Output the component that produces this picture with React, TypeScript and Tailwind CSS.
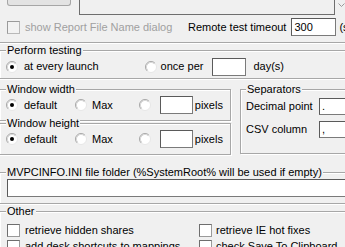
import React from "react";

function Radio({ checked = false }: { checked?: boolean }) {
  return (
    <svg width="12" height="12" viewBox="0 0 12 12" className="shrink-0">
      <circle cx="6" cy="6" r="5.5" fill="#fff" stroke="#e6e6e6" />
      <path d="M2.11 9.89 A5.5 5.5 0 0 1 9.89 2.11" fill="none" stroke="#a8a8a8" />
      <path d="M2.82 9.18 A4.5 4.5 0 0 1 9.18 2.82" fill="none" stroke="#d8d8d8" />
      {checked && <circle cx="6" cy="6" r="2" fill="#000" />}
    </svg>
  );
}

function Check({ disabled = false }: { disabled?: boolean }) {
  return (
    <span
      className={
        disabled
          ? "block w-[13px] h-[13px] shrink-0 border border-[#b8b8b8] border-t-[#9a9a9a] border-l-[#9a9a9a] bg-[#f2f2f2]"
          : "block w-[13px] h-[13px] shrink-0 border border-[#9a9a9a] border-t-[#6e6e6e] border-l-[#6e6e6e] bg-white"
      }
    />
  );
}

function Field({ w, h = 18, children }: { w: string; h?: number; children?: React.ReactNode }) {
  return (
    <div
      className={`${w} ${h === 17 ? "h-[17px]" : "h-[18px]"} shrink-0 bg-white border border-[#7a7a7a] border-t-[#5a5a5a] border-l-[#5a5a5a] px-[2px] flex items-center leading-[13px]`}
    >
      {children}
    </div>
  );
}

const box =
  "border border-[#a7a7a7] shadow-[inset_1px_1px_0_#fff,1px_1px_0_#fff]";

export default function App() {
  return (
    <div className="w-[345px] h-[247px] overflow-hidden bg-[#f0f0f0] font-['Liberation_Sans',Arial,sans-serif] text-[11px] leading-[13px] text-black">
      <div className="w-[380px] -ml-[1px] flex flex-col">
        {/* top group (cut off) */}
        <div className="border border-t-0 border-[#a7a7a7] shadow-[0_1px_0_#fff] pb-[6px]">
          <div className="flex h-[15px] items-start">
            <div className="ml-[7px] w-[64px] h-[6px] border border-t-0 border-[#a6a6a6] rounded-b-[3px] bg-[#e3e3e3]" />
            <div className="ml-[8px] w-[256px] h-[15px] border border-t-0 border-[#6e6e6e] bg-[#f0f0f0]" />
            <svg width="7" height="5" viewBox="0 0 7 5" className="ml-[3px] mt-[3px]">
              <path d="M0.5 0.5 L3.5 3.5 L6.5 0.5" fill="none" stroke="#9a9a9a" />
            </svg>
          </div>
          <div className="flex items-center h-[18px] mt-[3px]">
            <div className="w-[181px] flex items-center pl-[7px]">
              <Check disabled />
              <span className="ml-[5px] text-[#a0a0a0] whitespace-nowrap">show Report File Name dialog</span>
            </div>
            <span className="ml-[7px] whitespace-nowrap">Remote test timeout</span>
            <div className="ml-[5px]">
              <Field w="w-[45px]">300</Field>
            </div>
            <span className="ml-[3px]">(s)</span>
          </div>
        </div>

        {/* Perform testing */}
        <fieldset className={`mt-[1px] ${box} pb-[2px]`}>
          <legend className="ml-[6px] px-[1px] bg-[#f0f0f0] leading-[13px]">Perform testing</legend>
          <div className="flex items-center h-[19px]">
            <div className="ml-[6px] flex items-center">
              <Radio checked />
              <span className="ml-[6px]">at every launch</span>
            </div>
            <div className="ml-[46px] flex items-center">
              <Radio />
              <span className="ml-[4px]">once per</span>
            </div>
            <div className="ml-[9px]">
              <Field w="w-[34px]" />
            </div>
            <span className="ml-[7px]">day(s)</span>
          </div>
        </fieldset>

        {/* Window width/height + Separators */}
        <div className="flex mt-[4px] items-start">
          <div className="w-[232px] flex flex-col">
            {["Window width", "Window height"].map((t, i) => (
              <fieldset key={t} className={`${i === 1 ? "-mt-[4px]" : ""} ${box} pb-[6px]`}>
                <legend className="ml-[6px] px-[1px] bg-[#f0f0f0] leading-[13px]">{t}</legend>
                <div className="flex items-center h-[18px]">
                  <div className="ml-[6px] flex items-center">
                    <Radio checked />
                    <span className="ml-[6px]">default</span>
                  </div>
                  <div className="ml-[18px] flex items-center">
                    <Radio />
                    <span className="ml-[5px]">Max</span>
                  </div>
                  <div className="ml-[26px] flex items-center">
                    <Radio />
                  </div>
                  <div className="ml-[9px]">
                    <Field w="w-[33px]" />
                  </div>
                  <span className="ml-[2px]">pixels</span>
                </div>
              </fieldset>
            ))}
          </div>
          <fieldset className={`ml-[9px] w-[130px] ${box} pb-[15px]`}>
            <legend className="ml-[5px] px-[1px] bg-[#f0f0f0] leading-[13px]">Separators</legend>
            <div className="flex flex-col gap-[6px] pt-[2px] pl-[5px]">
              <div className="flex items-center">
                <span className="w-[73px]">Decimal point</span>
                <Field w="w-[50px]" h={17}>.</Field>
              </div>
              <div className="flex items-center">
                <span className="w-[73px]">CSV column</span>
                <Field w="w-[50px]" h={17}>,</Field>
              </div>
            </div>
          </fieldset>
        </div>

        {/* MVPCINFO */}
        <fieldset className={`mt-[11px] ${box} pb-[6px]`}>
          <legend className="ml-[6px] px-[1px] bg-[#f0f0f0] leading-[13px]">MVPCINFO.INI file folder (%SystemRoot% will be used if empty)</legend>
          <div className="pl-[7px]">
            <Field w="w-[360px]" />
          </div>
        </fieldset>

        {/* Other */}
        <fieldset className={`mt-[1px] ${box} pt-[4px]`}>
          <legend className="ml-[6px] px-[1px] bg-[#f0f0f0] leading-[13px]">Other</legend>
          <div className="grid grid-cols-[192px_1fr] pl-[7px]">
            <div className="flex items-center h-[16px]">
              <Check />
              <span className="ml-[5px] whitespace-nowrap">retrieve hidden shares</span>
            </div>
            <div className="flex items-center h-[16px]">
              <Check />
              <span className="ml-[4px] whitespace-nowrap">retrieve IE hot fixes</span>
            </div>
            <div className="flex items-center h-[16px]">
              <Check />
              <span className="ml-[5px] whitespace-nowrap">add desk shortcuts to mappings</span>
            </div>
            <div className="flex items-center h-[16px]">
              <Check />
              <span className="ml-[4px] whitespace-nowrap">check Save To Clipboard</span>
            </div>
          </div>
          <div className="h-[20px]" />
        </fieldset>
      </div>
    </div>
  );
}
